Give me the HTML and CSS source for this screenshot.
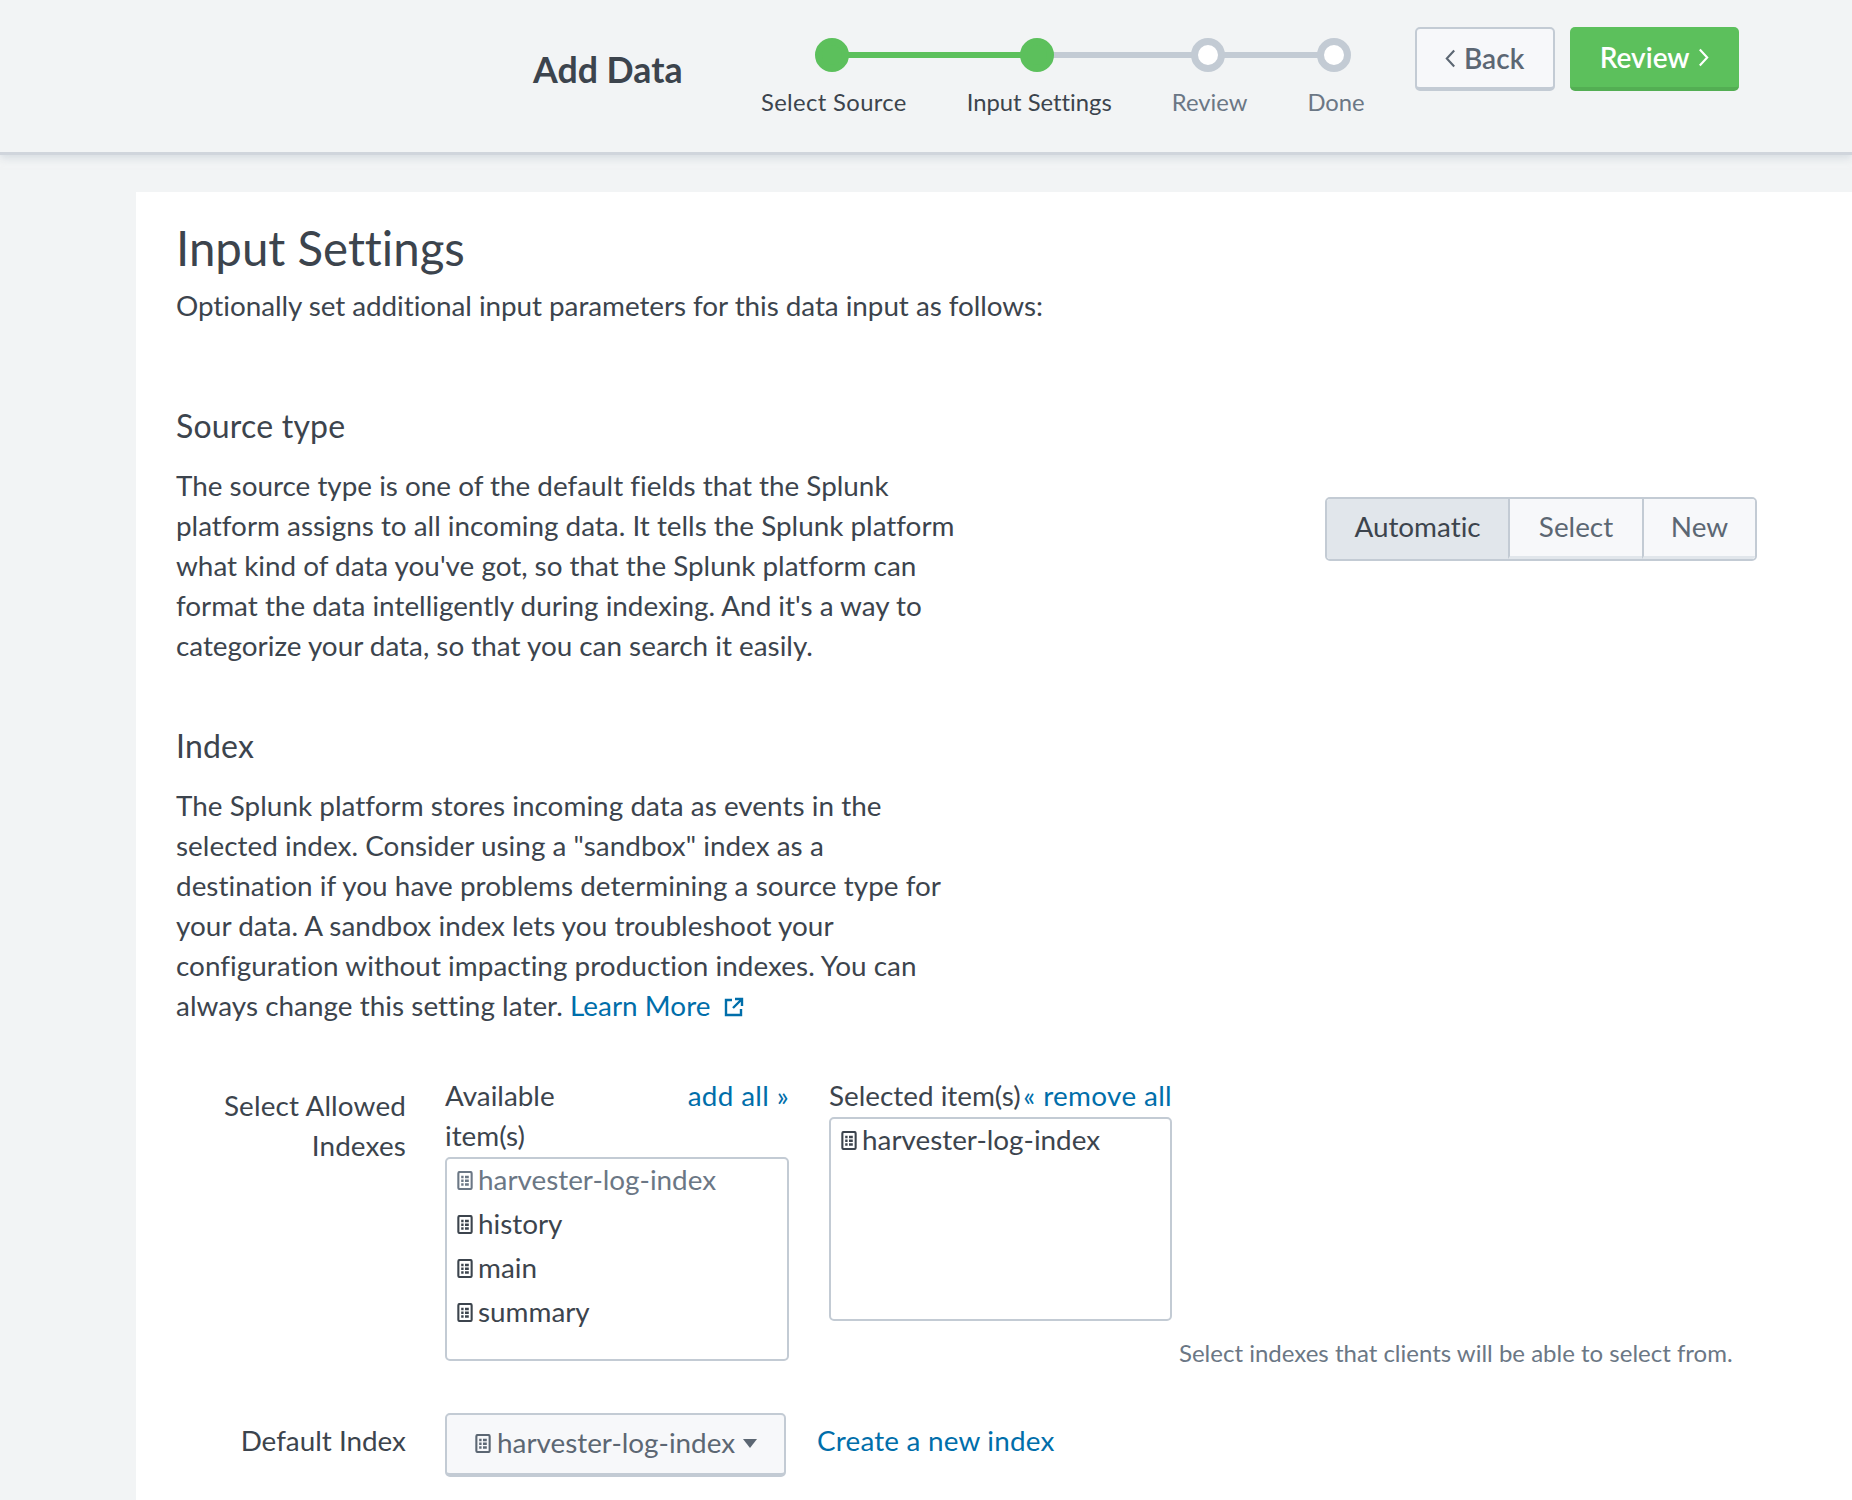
FILE: index.html
```html
<!DOCTYPE html>
<html lang="en">
<head>
    <meta charset="UTF-8">
    <title>Add Data - Input Settings</title>
    <link rel="stylesheet" href="styles.css">
</head>
<body>
    <svg class="icon-defs" aria-hidden="true">
        <symbol id="indexIcon" viewBox="0 0 16 20">
            <rect x="1" y="1" width="14" height="18" rx="1.5" fill="none" stroke="currentColor" stroke-width="2.2"/>
            <path d="M4 5h2.5v2.5H4zM8 5h4v2.5H8zM4 9h2.5v2.5H4zM8 9h4v2.5H8zM4 13h2.5v2.5H4zM8 13h4v2.5H8z" fill="currentColor"/>
        </symbol>
    </svg>

    <div class="header">
        <h1 class="header-title">Add Data</h1>
        <div class="steps">
            <div class="step done">
                <span class="step-dot"></span>
                <span class="step-label">Select Source</span>
            </div>
            <div class="step done">
                <span class="step-dot"></span>
                <span class="step-label">Input Settings</span>
            </div>
            <div class="step">
                <span class="step-dot"></span>
                <span class="step-label">Review</span>
            </div>
            <div class="step">
                <span class="step-dot"></span>
                <span class="step-label">Done</span>
            </div>
        </div>
        <div class="header-actions">
            <a href="#" class="btn btn-back">
                <svg class="chevron" viewBox="0 0 10 18"><path d="M8.5 1.5 1.5 9l7 7.5" fill="none" stroke="currentColor" stroke-width="2"/></svg>
                Back
            </a>
            <a href="#" class="btn btn-primary">
                Review
                <svg class="chevron" viewBox="0 0 10 18"><path d="M1.5 1.5 8.5 9l-7 7.5" fill="none" stroke="currentColor" stroke-width="2"/></svg>
            </a>
        </div>
    </div>

    <div class="panel">
        <h2 class="panel-title">Input Settings</h2>
        <p class="panel-intro">Optionally set additional input parameters for this data input as follows:</p>

        <div class="section section-source">
            <div class="section-text">
                <h3>Source type</h3>
                <p>The source type is one of the default fields that the Splunk<br>
                platform assigns to all incoming data. It tells the Splunk platform<br>
                what kind of data you've got, so that the Splunk platform can<br>
                format the data intelligently during indexing. And it's a way to<br>
                categorize your data, so that you can search it easily.</p>
            </div>
            <div class="segmented">
                <a href="#" class="segment active">Automatic</a>
                <a href="#" class="segment">Select</a>
                <a href="#" class="segment">New</a>
            </div>
        </div>

        <div class="section">
            <div class="section-text">
                <h3>Index</h3>
                <p>The Splunk platform stores incoming data as events in the<br>
                selected index. Consider using a "sandbox" index as a<br>
                destination if you have problems determining a source type for<br>
                your data. A sandbox index lets you troubleshoot your<br>
                configuration without impacting production indexes. You can<br>
                always change this setting later. <a href="#" class="link">Learn More<svg class="external" viewBox="0 0 20 20"><path d="M8 3H2v15h15v-6M11 2h7v7M18 2 9 11" fill="none" stroke="currentColor" stroke-width="2.4"/></svg></a></p>
            </div>
        </div>

        <div class="field field-allowed">
            <label class="field-label">Select Allowed Indexes</label>
            <div class="picker picker-available">
                <div class="picker-head">
                    <span class="picker-name picker-name-narrow">Available item(s)</span>
                    <a href="#" class="link">add all »</a>
                </div>
                <ul class="picker-list">
                    <li class="picked"><svg class="index-icon"><use href="#indexIcon"/></svg>harvester-log-index</li>
                    <li><svg class="index-icon"><use href="#indexIcon"/></svg>history</li>
                    <li><svg class="index-icon"><use href="#indexIcon"/></svg>main</li>
                    <li><svg class="index-icon"><use href="#indexIcon"/></svg>summary</li>
                </ul>
            </div>
            <div class="picker picker-selected">
                <div class="picker-head">
                    <span class="picker-name">Selected item(s)</span>
                    <a href="#" class="link">« remove all</a>
                </div>
                <ul class="picker-list">
                    <li><svg class="index-icon"><use href="#indexIcon"/></svg>harvester-log-index</li>
                </ul>
            </div>
            <div class="help-text">Select indexes that clients will be able to select from.</div>
        </div>

        <div class="field field-default">
            <label class="field-label">Default Index</label>
            <a href="#" class="dropdown">
                <svg class="index-icon"><use href="#indexIcon"/></svg>
                <span class="dropdown-value">harvester-log-index</span>
                <span class="caret"></span>
            </a>
            <a href="#" class="link create-link">Create a new index</a>
        </div>
    </div>
</body>
</html>
```

FILE: styles.css
```css
:root {
    --text: #3c444d;
    --text-light: #6b7785;
    --border: #c3cbd4;
    --green: #5cc05c;
    --green-dark: #53ae53;
    --link: #006eaa;
    --background: #f2f4f5;
    --button: #f7f8fa;
}

* {
    margin: 0;
    padding: 0;
    box-sizing: border-box;
}

body {
    background-color: var(--background);
    color: var(--text);
    font-family: 'Lato', sans-serif;
    font-size: 27.85px;
    font-variant-ligatures: none;
    line-height: 40px;
}

a {
    text-decoration: none;
}

.icon-defs {
    display: none;
}

.link {
    color: var(--link);
}

/* header */

.header {
    display: flex;
    height: 155px;
    padding-left: 533px;
    background-color: var(--background);
    border-bottom: 3px solid #d0d5dc;
    box-shadow: 0 3px 8px rgba(195, 203, 212, 0.6);
}

.header-title {
    width: 150px;
    margin-top: 49px;
    font-size: 35.7px;
    font-weight: 700;
    line-height: 42px;
    white-space: nowrap;
}

.steps {
    display: flex;
    gap: 60px;
    margin-left: 78px;
    padding-top: 38px;
}

.step {
    position: relative;
    display: flex;
    flex-direction: column;
    align-items: center;
    gap: 14px;
}

.step-dot {
    position: relative;
    z-index: 1;
    width: 34px;
    height: 34px;
    margin-right: 4px;
    border: 7px solid var(--border);
    border-radius: 50%;
    background-color: #fff;
}

.step.done .step-dot {
    border-color: var(--green);
    background-color: var(--green);
}

.step-label {
    color: var(--text-light);
    font-size: 23.8px;
    line-height: 32px;
    white-space: nowrap;
}

.step:first-child .step-label {
    letter-spacing: 0.36px;
}

.step.done .step-label {
    color: var(--text);
}

/* connector from this dot to the next one */
.step:not(:last-child)::after {
    content: "";
    position: absolute;
    top: 14px;
    left: 50%;
    width: 205px;
    height: 6px;
    background-color: var(--border);
}

.step:first-child::after {
    background-color: var(--green);
}

.step:nth-child(2)::after {
    width: 170px;
}

.step:nth-child(3)::after {
    width: 125px;
}

.header-actions {
    display: flex;
    gap: 15px;
    margin-left: 50px;
    padding-top: 27px;
}

.btn {
    display: flex;
    align-items: center;
    justify-content: center;
    gap: 8px;
    height: 64px;
    border-radius: 5px;
    font-size: 28px;
    font-weight: 600;
}

.btn-back {
    width: 140px;
    color: #5c6773;
    background-color: var(--button);
    border: 2px solid var(--border);
    border-bottom-width: 4px;
}

.btn-primary {
    width: 169px;
    color: #fff;
    background-color: var(--green);
    border-bottom: 4px solid var(--green-dark);
}

.chevron {
    width: 11px;
    height: 19px;
}

/* panel */

.panel {
    height: 1308px;
    margin: 37px 0 0 136px;
    padding: 28px 0 0 40px;
    background-color: #fff;
}

.panel-title {
    font-size: 47.4px;
    font-weight: 400;
    line-height: 56px;
}

.panel-intro {
    margin-top: 10px;
    letter-spacing: -0.05px;
}

.section {
    display: flex;
    justify-content: space-between;
    margin-top: 60px;
    padding-right: 95px;
}

.section-source {
    margin-top: 80px;
}

.section h3 {
    margin-bottom: 20px;
    font-size: 32px;
    font-weight: 400;
    letter-spacing: 0.2px;
}

.section p {
    letter-spacing: 0.04px;
    white-space: nowrap;
}

.section-source p {
    letter-spacing: 0;
}

.external {
    width: 20px;
    height: 20px;
    margin-left: 14px;
    vertical-align: -1px;
}

.segmented {
    display: flex;
    height: 64px;
    margin-top: 91px;
    border: 2px solid var(--border);
    border-radius: 5px;
    overflow: hidden;
}

.segment {
    display: flex;
    align-items: center;
    justify-content: center;
    width: 134px;
    padding-bottom: 2px;
    color: #5c6773;
    background-color: var(--button);
    border-left: 2px solid var(--border);
    border-bottom: 3px solid #e1e6eb;
}

.segment.active {
    width: 181px;
    padding-bottom: 5px;
    color: var(--text);
    background-color: #e1e6eb;
    border-left: 0;
    border-bottom: 0;
}

.segment:last-child {
    width: 113px;
}

/* fields */

.field {
    display: flex;
}

.field-label {
    flex: none;
    width: 230px;
    margin-right: 39px;
    letter-spacing: 0.15px;
    text-align: right;
}

.field-allowed {
    height: 285px;
    margin-top: 50px;
}

.field-allowed .field-label {
    padding-top: 10px;
    padding-left: 30px;
}

.picker {
    display: flex;
    flex-direction: column;
    width: 344px;
}

.picker-available {
    margin-right: 40px;
}

.picker-selected {
    width: 343px;
    margin-right: 7px;
}

.picker-head {
    display: flex;
    justify-content: space-between;
    margin-bottom: 1px;
}

.picker-head .link {
    letter-spacing: 0.35px;
}

.picker-name {
    white-space: nowrap;
}

.picker-name-narrow {
    width: 140px;
    white-space: normal;
}

.picker-list {
    height: 204px;
    list-style: none;
    border: 2px solid var(--border);
    border-radius: 5px;
}

.picker-list li {
    display: flex;
    align-items: center;
    height: 44px;
    padding: 0 0 2px 10px;
}

.picker-list li.picked {
    color: var(--text-light);
}

.index-icon {
    flex: none;
    width: 16px;
    height: 19px;
    margin-right: 5px;
}

.help-text {
    margin-top: 261px;
    color: var(--text-light);
    font-size: 24px;
    line-height: 32px;
    white-space: nowrap;
}

.field-default {
    align-items: flex-start;
    margin-top: 52px;
}

.field-default .field-label {
    padding-top: 8px;
    letter-spacing: 0;
}

.dropdown {
    display: flex;
    align-items: center;
    width: 341px;
    height: 64px;
    padding: 0 0 2px 28px;
    color: #5c6773;
    background-color: var(--button);
    border: 2px solid var(--border);
    border-bottom-width: 4px;
    border-radius: 5px;
}

.dropdown .index-icon {
    margin-right: 6px;
}

.caret {
    margin: 0 0 0 8px;
    border-top: 9px solid #5c6773;
    border-left: 7px solid transparent;
    border-right: 7px solid transparent;
}

.create-link {
    margin: 8px 0 0 31px;
    letter-spacing: 0.2px;
}
```
